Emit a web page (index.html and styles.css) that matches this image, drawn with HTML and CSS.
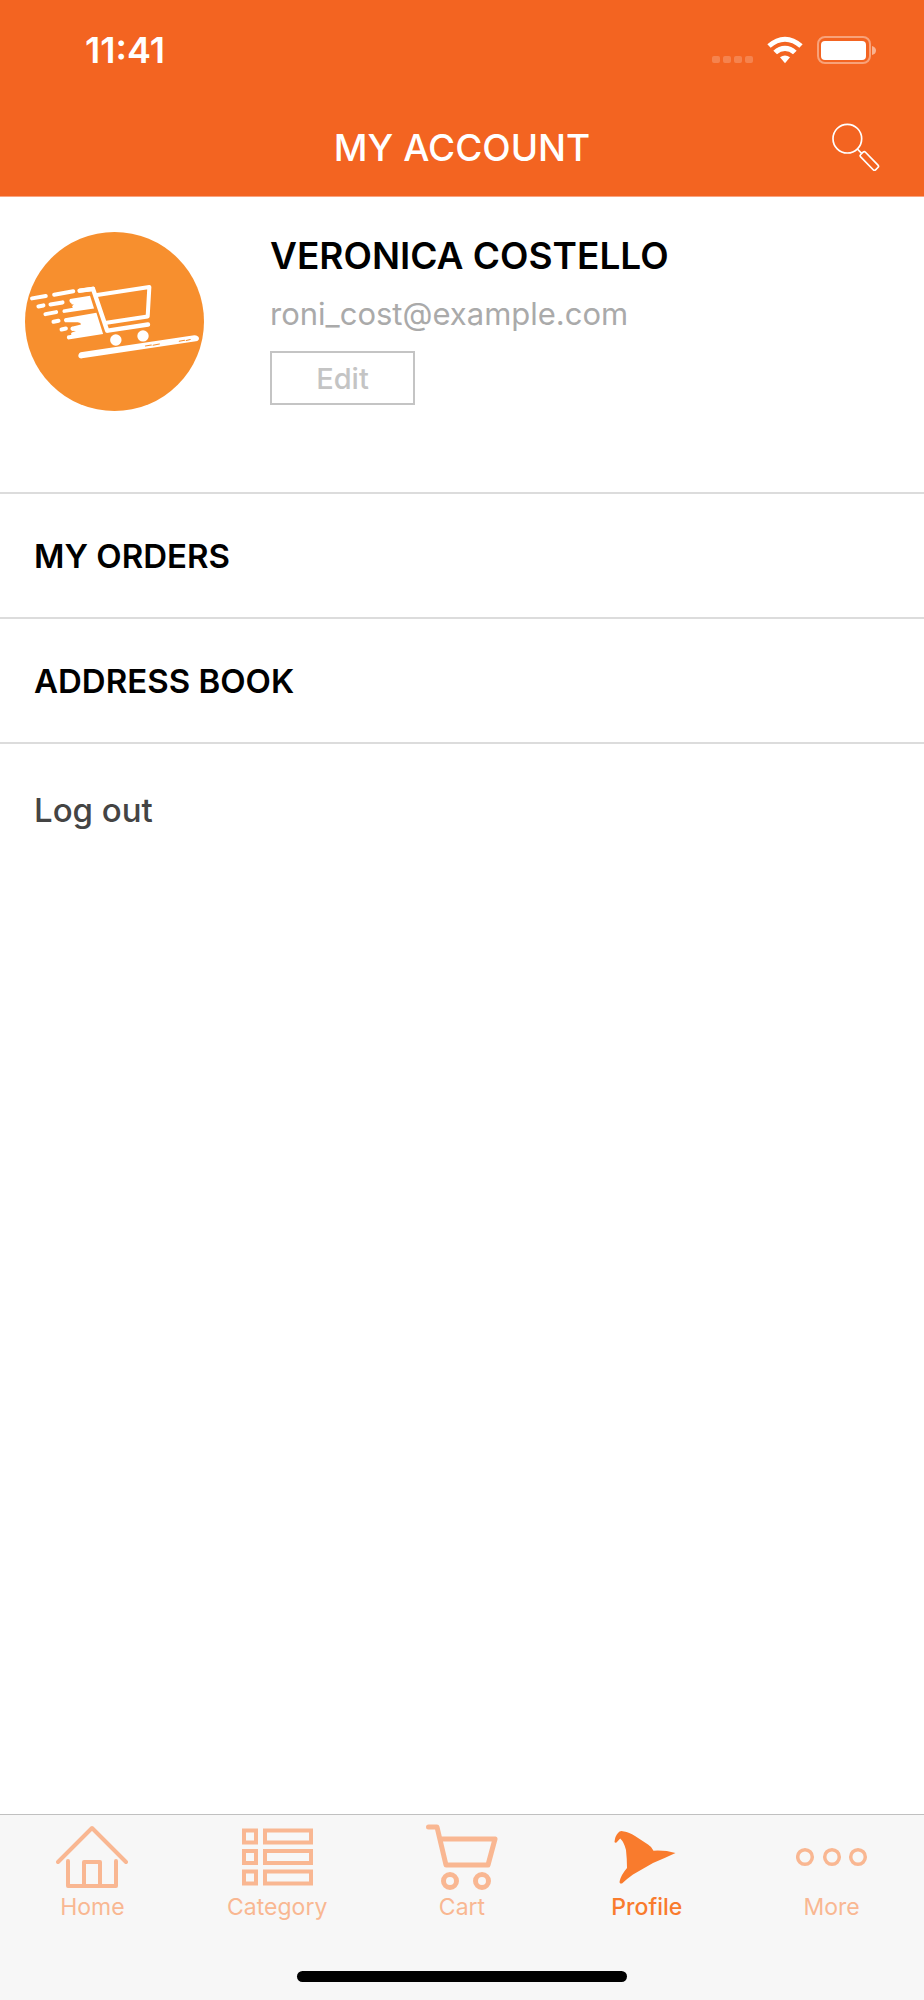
FILE: index.html
```html
<!DOCTYPE html>
<html lang="en">
<head>
  <meta charset="UTF-8" />
  <meta name="viewport" content="width=device-width, initial-scale=1.0"/>
  <title>My Account</title>
  <link rel="stylesheet" href="styles.css">
</head>
<body>
  <header class="header">
    <div class="status-bar">
      <span class="time">11:41</span>
      <div class="status-icons">
        <svg width="41" height="28" viewBox="0 0 41 28" fill="#fff" opacity=".2">
          <rect x="0" y="20" width="8" height="7" rx="2"/>
          <rect x="11" y="20" width="8" height="7" rx="2"/>
          <rect x="22" y="20" width="8" height="7" rx="2"/>
          <rect x="33" y="20" width="8" height="7" rx="2"/>
        </svg>
        <svg width="36" height="28" viewBox="202 48 108 84" fill="#fff">
          <path d="M203 73 Q228 50 256 50 Q284 50 309 73 L299 83 Q279 65 256 65 Q233 65 213 83 Z"/>
          <path d="M221 92 Q237 77 256 77 Q275 77 291 92 L280 103 Q269 93 256 93 Q243 93 232 103 Z"/>
          <path d="M241 112 Q256 101 271 112 L256 130 Z"/>
        </svg>
        <svg width="60" height="28" viewBox="0 0 60 28" fill="none">
          <rect x="1" y="1" width="52" height="26" rx="7" stroke="#fff" stroke-width="2" opacity=".4"/>
          <rect x="4" y="5" width="45" height="19" rx="4" fill="#fff"/>
          <path d="M55 10 Q59 11 59 14.500 Q59 18 55 19 Z" fill="#fff" opacity=".5"/>
        </svg>
      </div>
    </div>
    <div class="title-bar">
      <h1 class="title">MY ACCOUNT</h1>
      <button class="search" type="button" aria-label="Search">
        <svg width="48" height="48" viewBox="36 38 144 144" fill="none" stroke="#fff" stroke-width="5">
          <circle cx="82" cy="85" r="43"/>
          <path d="M112 116 L125 129"/>
          <rect x="-32" y="-10" width="64" height="20" rx="5" transform="translate(148 152) rotate(46)"/>
        </svg>
      </button>
    </div>
  </header>

  <main class="content">
    <section class="profile">
      <svg class="avatar" viewBox="75 67 534 534" fill="none" stroke="#fff" stroke-linecap="round" stroke-linejoin="round">
        <circle cx="342" cy="334" r="267" fill="#f78f2e" stroke="none"/>
        <!-- speed lines -->
        <g stroke-width="12">
          <path d="M96 265 L137 258 M162 254 L219 244 M238 242 L278 236"/>
          <path d="M115 289 L130 286 M151 283 L187 277"/>
          <path d="M136 312 L168 306 M160 335 L175 332 M184 358 L197 355"/>
        </g>
        <path d="M209 267 L269 257 L281 295 L190 309 Q184 304 189 298 L218 293 L216 288 L230 286 L227 279 L210 278 Q205 272 209 267 Z" fill="#fff" stroke="none"/>
        <path d="M194 324 L288 308 L308 371 L204 388 Q197 383 202 376 L220 373 L218 369 L234 366 L231 360 L215 362 Q209 356 215 350 L242 343 L239 336 L195 336 Q188 330 194 324 Z" fill="#fff" stroke="none"/>
        <path d="M218 278 H228 M222 289 L233 284 M238 332 L252 332 M216 355 L238 360 M218 371 L240 364" stroke-width="11"/>
        <!-- cart -->
        <path d="M238 242 L278 237 L320 361" stroke-width="13"/>
        <path d="M290 255 L446 231 L441 319 L318 338" stroke-width="12"/>
        <path d="M322 361 L442 343" stroke-width="13"/>
        <circle cx="346" cy="389" r="17" fill="#fff" stroke="none"/>
        <circle cx="427" cy="377" r="17" fill="#fff" stroke="none"/>
        <!-- board -->
        <path d="M234 436 Q235 426 246 425 L580 375 Q593 376 594 384 Q594 392 585 393 L245 444 Q235 445 234 436 Z" fill="#fff" stroke="none"/>
        <path d="M434 407 L452 404 M457 405 L476 401 M535 393 L551 390 M556 391 L568 388" stroke="#f78f2e" stroke-width="3"/>
      </svg>
      <div class="profile-info">
        <h2 class="name">VERONICA COSTELLO</h2>
        <p class="email">roni_cost@example.com</p>
        <button class="edit" type="button">Edit</button>
      </div>
    </section>

    <nav class="menu">
      <a class="menu-item" href="#">MY ORDERS</a>
      <a class="menu-item" href="#">ADDRESS BOOK</a>
    </nav>
    <a class="logout" href="#">Log out</a>
  </main>

  <footer class="footer">
    <nav class="tabs">
      <a class="tab" href="#">
        <svg class="tab-icon" viewBox="0 0 72 68" stroke-width="4" stroke-linecap="round" stroke-linejoin="round">
          <path d="M2 39 L36 5 L70 39"/>
          <path d="M12 38 V63 H60 V38"/>
          <path d="M28 62 V39 H44 V62"/>
        </svg>
        <span>Home</span>
      </a>
      <a class="tab" href="#">
        <svg class="tab-icon" viewBox="0 0 72 68" stroke-width="4">
          <rect x="3" y="7.500" width="12" height="12"/>
          <rect x="24" y="7.500" width="46" height="12"/>
          <rect x="3" y="28" width="12" height="12"/>
          <rect x="24" y="28" width="46" height="12"/>
          <rect x="3" y="48.500" width="12" height="12"/>
          <rect x="24" y="48.500" width="46" height="12"/>
        </svg>
        <span>Category</span>
      </a>
      <a class="tab" href="#">
        <svg class="tab-icon" viewBox="0 0 72 68" stroke-width="5" stroke-linecap="round" stroke-linejoin="round">
          <path d="M2.500 4 H11 L20 42 H62 L69 16 H15"/>
          <circle cx="24" cy="58" r="6.500"/>
          <circle cx="56" cy="58" r="6.500"/>
        </svg>
        <span>Cart</span>
      </a>
      <a class="tab active" href="#">
        <svg class="tab-icon filled" viewBox="0 0 72 68">
          <path d="M3.500 19 Q4 13 7 10 Q9 7 13 8.500 Q18 9 24 13 L37 21.500 Q41 24 42.500 27.700 Q54 27 64.500 30 Q54 35 42 40 L22 51.500 Q17 55 11 60.500 Q8 61 8.700 58 Q10 52 16 45 Q16 36 15 27 Q13 19 9.200 15.500 L5.500 19.500 Q4 20 3.500 19 Z"/>
        </svg>
        <span>Profile</span>
      </a>
      <a class="tab" href="#">
        <svg class="tab-icon" viewBox="0 0 72 68" stroke-width="3.500">
          <circle cx="9" cy="34" r="7.300"/>
          <circle cx="36" cy="34" r="7.300"/>
          <circle cx="62" cy="34" r="7.300"/>
        </svg>
        <span>More</span>
      </a>
    </nav>
    <div class="home-indicator"></div>
  </footer>
</body>
</html>
```
FILE: styles.css
```css
* {
  box-sizing: border-box;
}
body {
  margin: 0;
  min-height: 100vh;
  display: flex;
  flex-direction: column;
  background: #fff;
  color: #000;
  font-family: Inter, "Liberation Sans", sans-serif;
}
h1, h2, p {
  margin: 0;
}
a {
  color: inherit;
  text-decoration: none;
}
button {
  background: none;
  border: none;
  padding: 0;
  font-family: inherit;
  cursor: pointer;
}
svg {
  display: block;
}
.header {
  background: #f36421;
  border-bottom: 1px solid #f9a480;
  color: #fff;
}
.status-bar {
  display: flex;
  align-items: center;
  justify-content: space-between;
  height: 100px;
  padding: 0 47px 0 85px;
}
.time {
  font-size: 36px;
  font-weight: 600;
}
.status-icons {
  display: flex;
  gap: 14px;
}
.title-bar {
  display: grid;
  grid-template-columns: 1fr auto 1fr;
  align-items: center;
  height: 96px;
  padding: 0 44px 2px;
}
.title {
  grid-column: 2;
  font-size: 37px;
  font-weight: 500;
}
.search {
  justify-self: end;
}
.content {
  flex: 1;
}
.profile {
  display: flex;
  align-items: flex-start;
  gap: 66px;
  padding: 35px 25px 81px;
}
.avatar {
  width: 179px;
  height: 179px;
  flex: none;
}
.name {
  font-size: 37px;
  font-weight: 600;
  line-height: 48px;
}
.email {
  margin-top: 12px;
  color: #aaa;
  font-size: 31px;
  font-weight: 400;
  line-height: 44px;
}
.edit {
  width: 145px;
  height: 54px;
  margin-top: 15px;
  border: 2px solid #c4c4c4;
  color: #c4c4c4;
  font-size: 29px;
  font-weight: 500;
}
.menu {
  border-top: 2px solid #dcdcdc;
}
.menu-item {
  display: flex;
  align-items: center;
  height: 125px;
  padding: 0 34px;
  border-bottom: 2px solid #dcdcdc;
  font-size: 33px;
  font-weight: 600;
}
.logout {
  display: inline-block;
  padding: 46px 34px;
  color: #444;
  font-size: 33px;
  font-weight: 500;
  line-height: 40px;
}
.footer {
  background: #f7f7f7;
  border-top: 1px solid #c0c0c0;
  padding: 8px 0 18px;
}
.tabs {
  display: flex;
}
.tab {
  flex: 1;
  display: flex;
  flex-direction: column;
  align-items: center;
  color: #f9b792;
  font-size: 23px;
  font-weight: 400;
  line-height: 32px;
}
.tab-icon {
  width: 72px;
  height: 68px;
  fill: none;
  stroke: currentColor;
}
.tab-icon.filled {
  fill: currentColor;
  stroke: none;
}
.tab.active {
  color: #f97b2d;
  font-weight: 500;
}
.home-indicator {
  width: 330px;
  height: 11px;
  margin: 48px auto 0;
  border-radius: 6px;
  background: #000;
}
```
